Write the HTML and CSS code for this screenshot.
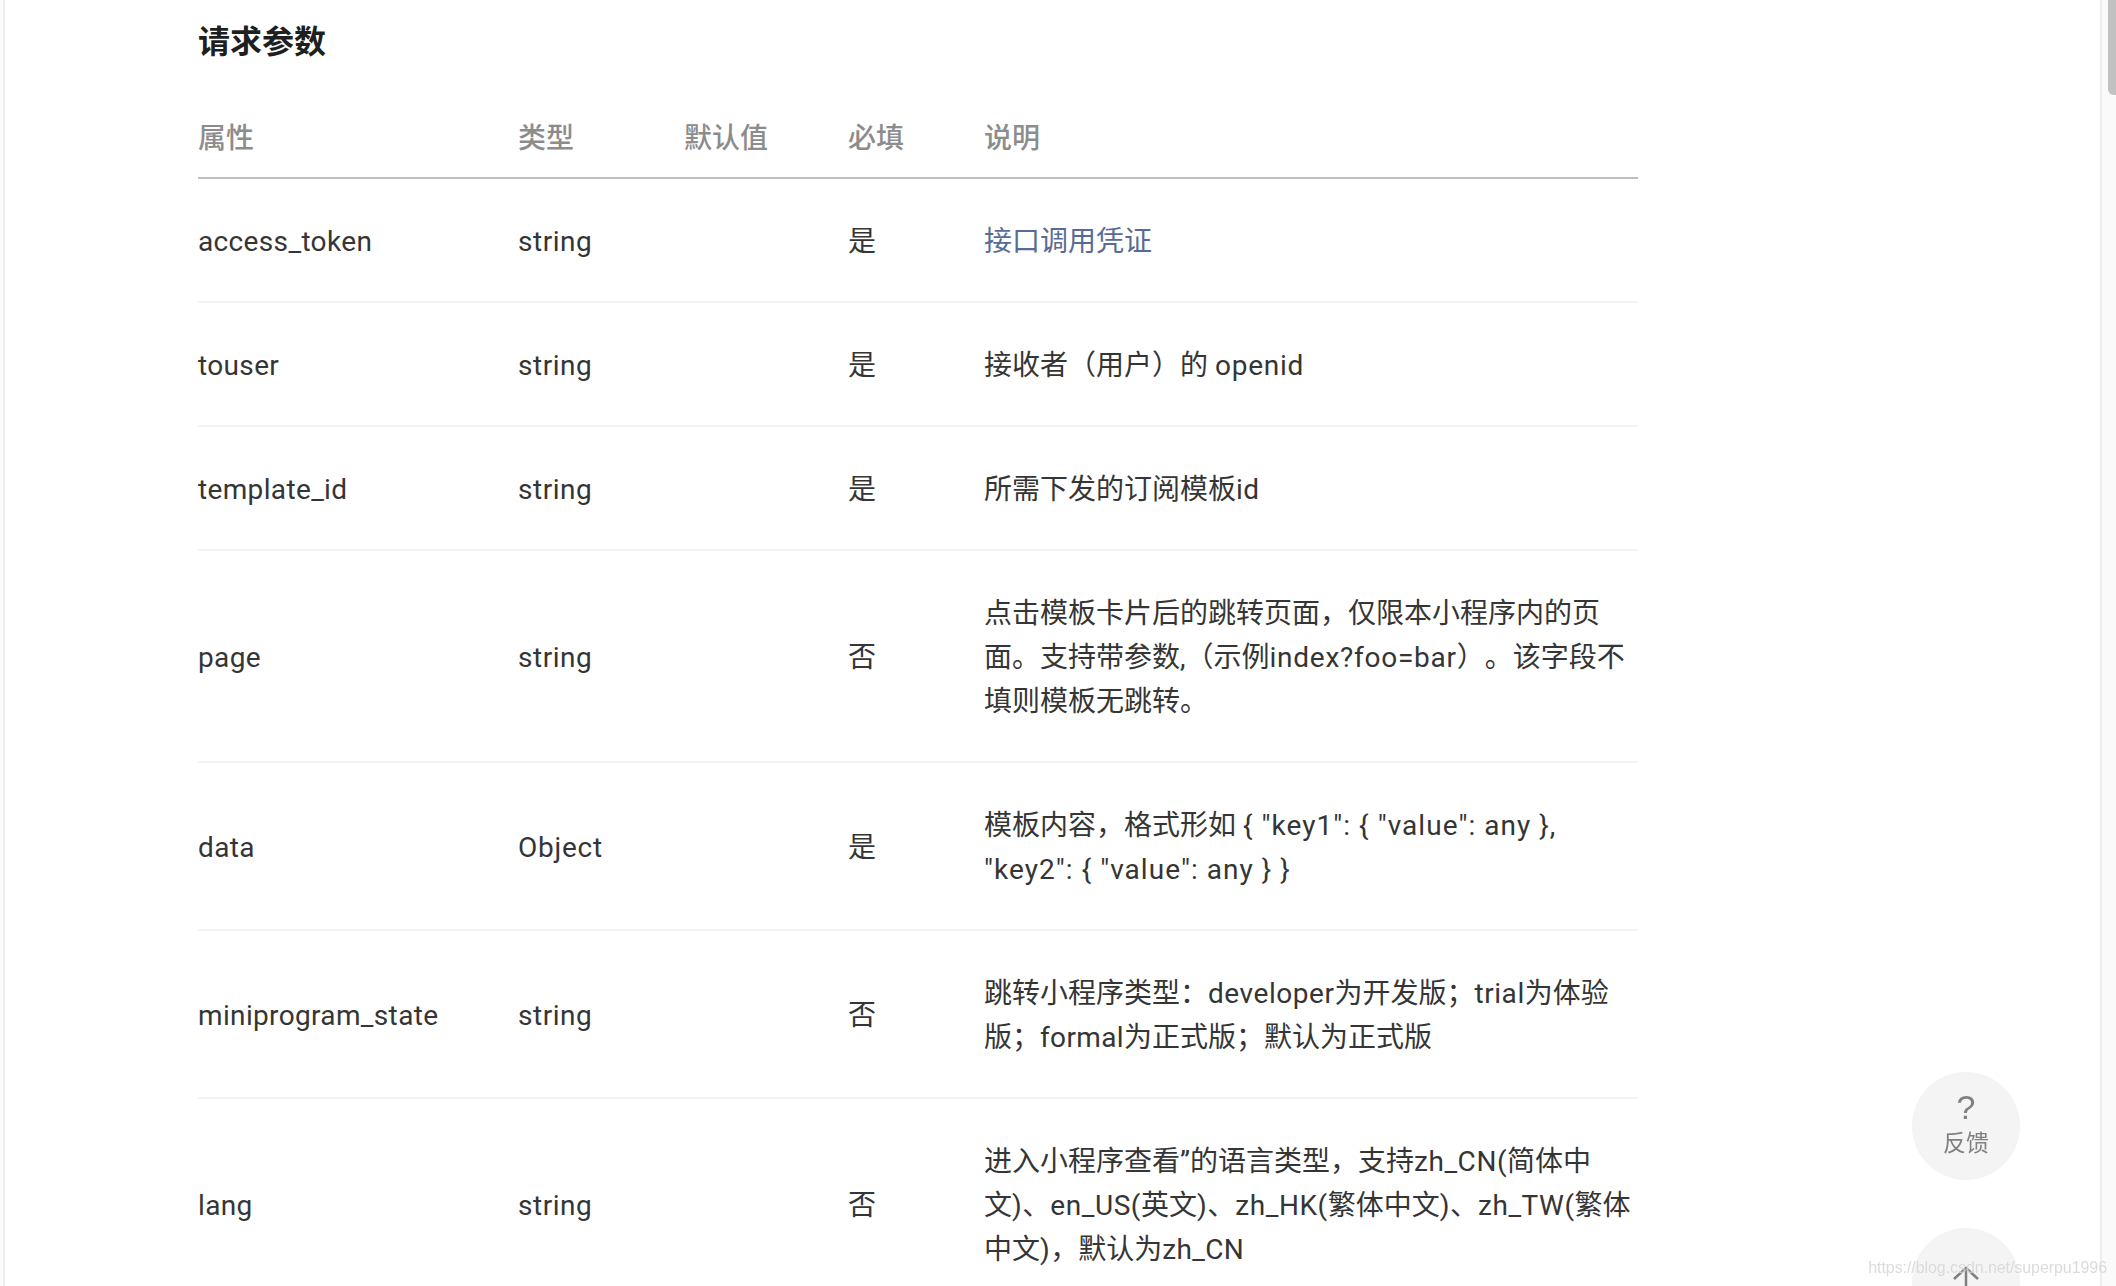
FILE: index.html
```html
<!DOCTYPE html>
<html lang="zh-CN">
<head>
<meta charset="utf-8">
<title>请求参数</title>
<link rel="stylesheet" href="styles.css">
</head>
<body>
<div class="shell">
  <div class="edge-left"></div>
  <main class="content">
    <h3 class="title">请求参数</h3>
    <table class="params">
      <colgroup>
        <col class="c1"><col class="c2"><col class="c3"><col class="c4"><col class="c5">
      </colgroup>
      <thead>
        <tr><th>属性</th><th>类型</th><th>默认值</th><th>必填</th><th>说明</th></tr>
      </thead>
      <tbody>
        <tr><td class="en">access_token</td><td class="en-m">string</td><td></td><td>是</td><td><a class="link" href="#">接口调用凭证</a></td></tr>
        <tr><td class="en">touser</td><td class="en-m">string</td><td></td><td>是</td><td>接收者（用户）的 <span class="en-w">openid</span></td></tr>
        <tr><td class="en">template_id</td><td class="en-m">string</td><td></td><td>是</td><td>所需下发的订阅模板<span class="en">id</span></td></tr>
        <tr><td class="en">page</td><td class="en-m">string</td><td></td><td>否</td><td>点击模板卡片后的跳转页面，仅限本小程序内的页<br>面。支持带参数,（示例<span class="en-w">index?foo=bar</span>）。该字段不<br>填则模板无跳转。</td></tr>
        <tr><td class="en">data</td><td class="en-w">Object</td><td></td><td>是</td><td>模板内容，格式形如 <span class="json">{ "key1": { "value": any },</span><br><span class="json">"key2": { "value": any } }</span></td></tr>
        <tr><td class="en">miniprogram_state</td><td class="en-m">string</td><td></td><td>否</td><td>跳转小程序类型：<span class="en-m">developer</span>为开发版；<span class="en-m">trial</span>为体验<br>版；<span class="en">formal</span>为正式版；默认为正式版</td></tr>
        <tr><td class="en">lang</td><td class="en-m">string</td><td></td><td>否</td><td>进入小程序查看”的语言类型，支持<span class="en-m">zh_CN(</span>简体中<br>文<span class="en-m">)</span>、<span class="en-m">en_US(</span>英文<span class="en-m">)</span>、<span class="en-m">zh_HK(</span>繁体中文<span class="en-m">)</span>、<span class="en-m">zh_TW(</span>繁体<br>中文<span class="en">)</span>，默认为<span class="en">zh_CN</span></td></tr>
      </tbody>
    </table>
  </main>
  <div class="edge-right"><div class="thumb"></div></div>
</div>
<div class="float-btn feedback">
  <span class="q">?</span>
  <span class="fb-label">反馈</span>
</div>
<div class="float-btn totop">
  <svg class="arrow" width="28" height="24" viewBox="0 0 28 24"><path d="M14 2V24M2 13L14 2L26 13" fill="none" stroke="#7f7f7f" stroke-width="2.5"/></svg>
</div>
<div class="watermark">https://blog.csdn.net/superpu1996</div>
</body>
</html>
```

FILE: styles.css
```css
* { box-sizing: border-box; }
html, body { margin: 0; height: 100%; overflow: hidden; background: #fff; }
body { font-family: Roboto, "Noto Sans CJK SC", sans-serif; color: #353535; text-spacing-trim: space-all; }
.shell { display: flex; height: 1286px; overflow: hidden; }
.edge-left { width: 5px; flex: none; background: #fafafa; border-right: 2px solid #ededed; }
.content { flex: 1; padding: 0 0 0 193px; min-width: 0; }
.edge-right { width: 16px; flex: none; background: #fafafa; border-left: 2px solid #ededed; padding-left: 6px; }
.thumb { width: 8px; height: 95px; background: #c1c1c1; border-radius: 0 0 0 6px; }
.title { margin: 0; padding-top: 20px; font-size: 32px; line-height: 44px; font-weight: 700; color: #1f1f1f; }
.params { width: 1440px; margin-top: 53px; border-collapse: separate; border-spacing: 0; table-layout: fixed; font-size: 28px; line-height: 44px; }
.c1 { width: 320px; } .c2 { width: 166px; } .c3 { width: 164px; } .c4 { width: 136px; } .c5 { width: 654px; }
.params th { text-align: left; font-weight: 500; color: #8c8c8c; padding: 0 0 16px; line-height: 44px; border-bottom: 2px solid #bfbfbf; }
.params td { padding: 41px 0 37px; vertical-align: middle; border-bottom: 2px solid #f4f4f4; white-space: nowrap; }
.en { letter-spacing: .35px; }
.en-m { letter-spacing: .55px; }
.en-w { letter-spacing: .75px; }
.json { letter-spacing: 1.05px; }
.link { color: #576b95; text-decoration: none; }
.float-btn { position: fixed; left: 1912px; width: 108px; height: 108px; border-radius: 50%; background: #f4f4f4; display: flex; flex-direction: column; align-items: center; }
.feedback { top: 1072px; color: #808080; }
.totop { top: 1228px; }
.q { font-size: 34px; line-height: 38px; margin-top: 16px; font-family: "Liberation Sans", sans-serif; }
.fb-label { font-size: 23px; line-height: 32px; margin-top: 2px; }
.arrow { margin-top: 38px; }
.watermark { position: fixed; right: 9px; top: 1258px; font: 16px/20px "Liberation Sans", sans-serif; letter-spacing: -.07px; color: rgba(190,190,190,.55); text-shadow: 0 0 1px rgba(255,255,255,.8); }
```
